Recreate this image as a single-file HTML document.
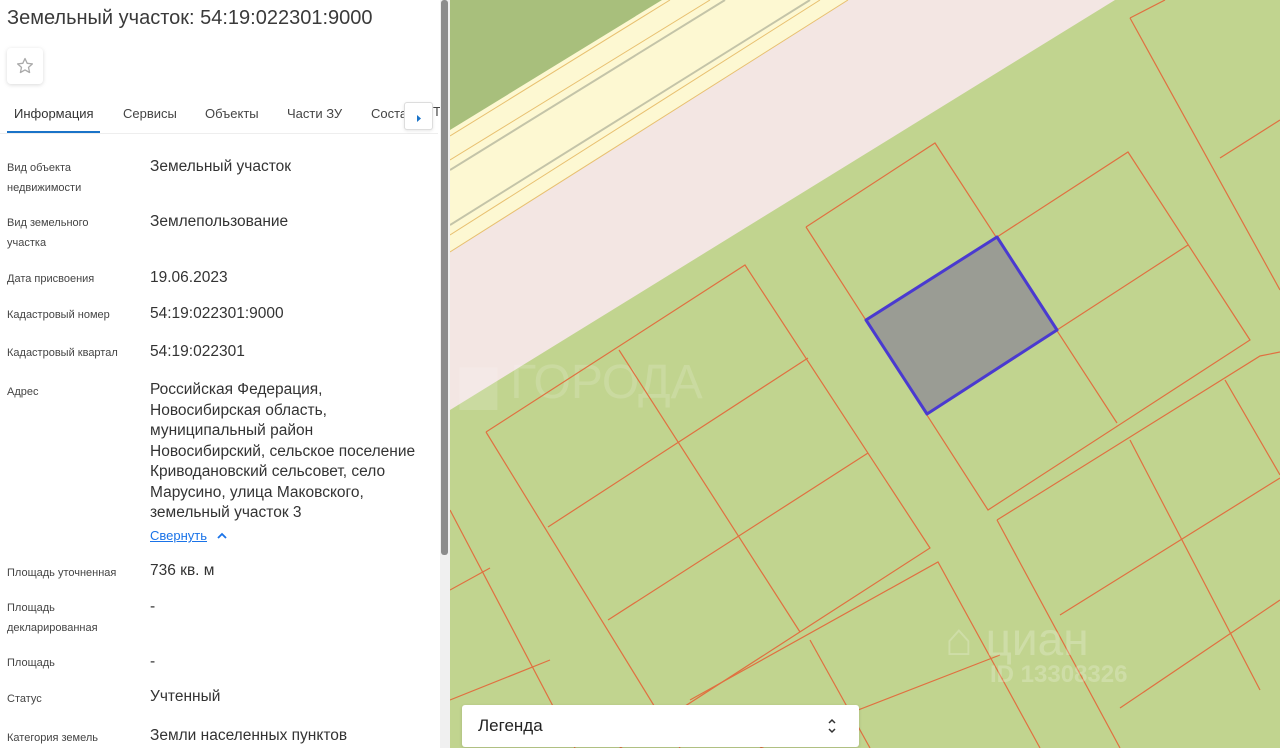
<!DOCTYPE html>
<html><head><meta charset="utf-8"><style>
*{margin:0;padding:0;box-sizing:border-box}
html,body{width:1280px;height:748px;overflow:hidden}
body{background:#fff;font-family:"Liberation Sans","Noto Sans CJK SC",sans-serif;color:#333;position:relative}
.a{position:absolute;white-space:nowrap}
.l{font-size:11px;line-height:20px;color:#444;left:7px}
.v{font-size:15.5px;line-height:20.5px;color:#333;left:150px}
</style></head><body>
<div class="a" style="left:7px;top:7px;font-size:20px;color:#3a3a3a">Земельный участок: 54:19:022301:9000</div>
<div class="a" style="left:7px;top:48px;width:36px;height:36px;border-radius:4px;box-shadow:0 1px 4px rgba(0,0,0,.15);background:#fff"><svg width="36" height="36" viewBox="0 0 36 36"><path d="M18 10.5l2.2 4.8 5.2.6-3.9 3.5 1.1 5.1L18 21.9l-4.6 2.6 1.1-5.1-3.9-3.5 5.2-.6z" fill="none" stroke="#aaa" stroke-width="1.3" stroke-linejoin="round"/></svg></div>
<div class="a" style="top:106px;left:14px;font-size:13px;color:#333">Информация</div>
<div class="a" style="top:106px;left:123px;font-size:13px;color:#444">Сервисы</div>
<div class="a" style="top:106px;left:205px;font-size:13px;color:#444">Объекты</div>
<div class="a" style="top:106px;left:287px;font-size:13px;color:#444">Части ЗУ</div>
<div class="a" style="top:106px;left:371px;font-size:13px;color:#444">Соста</div>
<div class="a" style="top:131px;left:7px;width:93px;height:2px;background:#1a73c8"></div>
<div class="a" style="top:133px;left:0;width:438px;height:1px;background:#eee"></div>
<div class="a" style="top:102px;left:404px;width:29px;height:28px;background:#fff;border:1px solid #ddd;border-radius:3px;box-shadow:0 1px 3px rgba(0,0,0,.1)"><svg width="27" height="26"><path d="M12 12l4 3.5-4 3.5z" fill="#1a73c8"/></svg></div>
<div class="a" style="left:433px;top:104px;font-size:13px;color:#444">Т</div>
<div class="a" style="left:440px;top:0;width:10px;height:748px;background:#f0f0f0"></div>
<div class="a" style="left:441px;top:0;width:7px;height:555px;background:#8c8c8c;border-radius:3px"></div>

<div class="a l" style="top:158px">Вид объекта<br>недвижимости</div><div class="a v" style="top:157px">Земельный участок</div>
<div class="a l" style="top:213px">Вид земельного<br>участка</div><div class="a v" style="top:212px">Землепользование</div>
<div class="a l" style="top:269px">Дата присвоения</div><div class="a v" style="top:268px">19.06.2023</div>
<div class="a l" style="top:305px">Кадастровый номер</div><div class="a v" style="top:304px">54:19:022301:9000</div>
<div class="a l" style="top:343px">Кадастровый квартал</div><div class="a v" style="top:342px">54:19:022301</div>
<div class="a l" style="top:382px">Адрес</div><div class="a v" style="top:380px">Российская Федерация,<br>Новосибирская область,<br>муниципальный район<br>Новосибирский, сельское поселение<br>Криводановский сельсовет, село<br>Марусино, улица Маковского,<br>земельный участок 3</div>
<div class="a" style="top:528px;left:150px;font-size:13px;color:#1a73e8;text-decoration:underline">Свернуть</div>
<svg class="a" style="left:216px;top:531px" width="12" height="10"><path d="M2 7l4-4 4 4" fill="none" stroke="#1a73e8" stroke-width="1.8"/></svg>
<div class="a l" style="top:563px">Площадь уточненная</div><div class="a v" style="top:561px">736 кв. м</div>
<div class="a l" style="top:598px">Площадь<br>декларированная</div><div class="a v" style="top:597px">-</div>
<div class="a l" style="top:653px">Площадь</div><div class="a v" style="top:652px">-</div>
<div class="a l" style="top:689px">Статус</div><div class="a v" style="top:687px">Учтенный</div>
<div class="a l" style="top:728px;height:20px;overflow:hidden">Категория земель</div><div class="a v" style="top:726px;height:22px;overflow:hidden">Земли населенных пунктов</div>

<svg class="a" style="left:450px;top:0" width="830" height="748" viewBox="450 0 830 748">
<rect x="450" y="0" width="830" height="748" fill="#c1d48f"/>
<polygon points="450,0 1115,0 450,410" fill="#f3e6e3"/>
<polygon points="450,0 848,0 450,252" fill="#fdf8d2"/>
<polygon points="450,0 662,0 450,130" fill="#a8bf7c"/>
<g stroke="#e8c070" stroke-width="1" fill="none"><line x1="450" y1="136" x2="670" y2="0"/><line x1="450" y1="252" x2="848" y2="0"/><line x1="450" y1="160" x2="710" y2="0"/><line x1="450" y1="235" x2="820" y2="0"/></g>
<g stroke="#c4c4a8" stroke-width="2" fill="none"><line x1="450" y1="170" x2="725" y2="0"/><line x1="450" y1="225" x2="810" y2="0"/></g>
<text x="460" y="398" font-size="48" fill="#fff" opacity=".15" font-family="Liberation Sans">▆ ГОРОДА</text>
<g stroke="#e07040" stroke-width="1.2" fill="none">
<polyline points="806,227 935,143 1117,423"/>
<polyline points="806,227 988,510 1250,340 1128,152 997,237"/>
<line x1="1057" y1="330" x2="1188" y2="245"/>
<polyline points="1130,18 1165,0"/><polyline points="1130,18 1280,290"/><line x1="1220" y1="158" x2="1280" y2="120"/>
<polyline points="486,432 745,265 930,548 555,790"/>
<polyline points="486,432 680,748"/>
<line x1="619" y1="350" x2="800" y2="632"/>
<line x1="548" y1="527" x2="808" y2="358"/>
<line x1="608" y1="620" x2="868" y2="453"/>
<polyline points="450,510 575,748"/>
<line x1="450" y1="590" x2="490" y2="568"/>
<line x1="450" y1="700" x2="550" y2="660"/>
<polyline points="690,700 938,562 1040,748"/>
<line x1="810" y1="640" x2="870" y2="748"/>
<line x1="760" y1="748" x2="1000" y2="655"/>
<polyline points="997,520 1260,356 1280,352"/>
<line x1="997" y1="520" x2="1120" y2="748"/>
<line x1="1130" y1="440" x2="1260" y2="690"/>
<line x1="1060" y1="615" x2="1280" y2="478"/>
<line x1="1120" y1="708" x2="1280" y2="600"/>
<line x1="1225" y1="380" x2="1280" y2="475"/>
</g>
<polygon points="866,320 997,237 1057,330 927,414" fill="#9a9c94" stroke="#4a3ad0" stroke-width="3" stroke-linejoin="round"/>
<text x="945" y="655" font-size="46" fill="#fff" opacity=".22" font-family="Liberation Sans">⌂ циан</text>
<text x="990" y="682" font-size="24" fill="#fff" opacity=".22" font-family="Liberation Sans" font-weight="bold">ID 13308326</text>
</svg>
<div class="a" style="left:462px;top:705px;width:397px;height:42px;background:#fff;border-radius:3px;box-shadow:0 1px 3px rgba(0,0,0,.15)"></div>
<div class="a" style="left:478px;top:716px;font-size:17px;color:#222">Легенда</div>
<svg class="a" style="left:826px;top:716px" width="12" height="20"><path d="M3 7l3-3 3 3M3 13l3 3 3-3" fill="none" stroke="#333" stroke-width="1.5"/></svg>
</body></html>
